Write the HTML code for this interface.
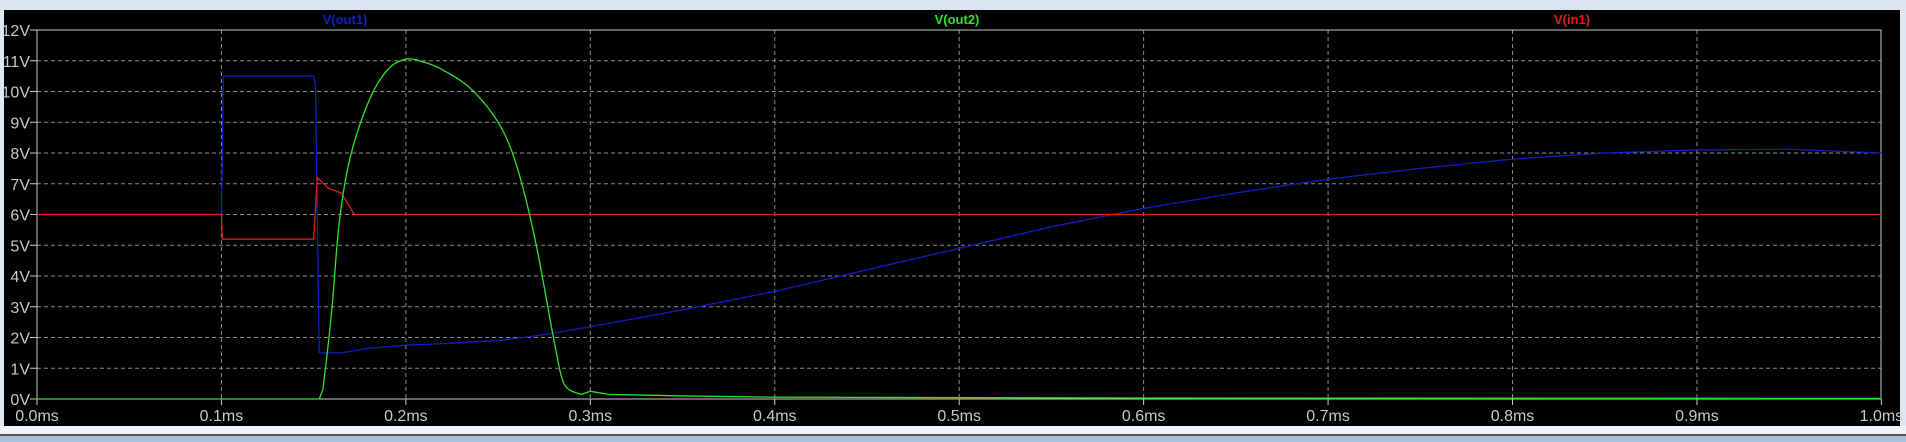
<!DOCTYPE html>
<html><head><style>
body{margin:0;width:1906px;height:442px;overflow:hidden;background:#dfe8f2;position:relative;font-family:"Liberation Sans",sans-serif}
#top{position:absolute;left:0;top:0;width:1906px;height:10px;background:#dce6f1}
#win{position:absolute;left:4px;top:10px;width:1896px;height:416px;background:#000}
#strip{position:absolute;left:0;top:426px;width:1906px;height:8px;background:#eef3f8}
#dk{position:absolute;left:0;top:434px;width:1906px;height:2px;background:#555}
#bl{position:absolute;left:0;top:436px;width:1906px;height:6px;background:#a9c1db}
svg{position:absolute;left:0;top:0}
text{font-family:"Liberation Sans Narrow","Liberation Sans",sans-serif}
</style></head><body>
<div id="top"></div><div id="win"></div><div id="strip"></div><div id="dk"></div><div id="bl"></div>
<svg id="s" width="1906" height="442"></svg>
<script>
var X=t=>37+t*1844.4, Y=v=>399-v*30.75, s=document.getElementById('s'), h='';
for(var i=1;i<10;i++){var x=X(i/10);h+=`<line x1="${x}" y1="30" x2="${x}" y2="399" stroke="#8a8a8a" stroke-dasharray="4,3"/>`;}
for(var v=1;v<12;v++){var y=Y(v);h+=`<line x1="37" y1="${y}" x2="1881" y2="${y}" stroke="#8a8a8a" stroke-dasharray="4,3"/>`;}
h+=`<rect x="37" y="${Y(12)}" width="1844" height="${Y(0)-Y(12)}" fill="none" stroke="#c8c8c8"/>`;
for(var v=0;v<=12;v++){var y=Y(v);h+=`<line x1="30" y1="${y}" x2="37" y2="${y}" stroke="#c8c8c8"/><text x="30" y="${y+6}" fill="#c8c8c8" font-size="16" text-anchor="end">${v}V</text>`;}
for(var i=0;i<=10;i++){var x=X(i/10);h+=`<line x1="${x}" y1="399" x2="${x}" y2="405" stroke="#c8c8c8"/><text x="${x}" y="421" fill="#c8c8c8" font-size="16" text-anchor="middle">${(i/10).toFixed(1)}ms</text>`;}
function P(a,c){return `<polyline fill="none" stroke="${c}" stroke-width="1.3" points="${a.map(p=>X(p[0])+','+Y(p[1])).join(' ')}"/>`;}
function S(a){var o=[];for(var i=0;i<a.length-1;i++){var p0=a[Math.max(0,i-1)],p1=a[i],p2=a[i+1],p3=a[Math.min(a.length-1,i+2)];for(var k=0;k<8;k++){var t=k/8,t2=t*t,t3=t2*t;var f=(q)=>0.5*((2*p1[q])+(-p0[q]+p2[q])*t+(2*p0[q]-5*p1[q]+4*p2[q]-p3[q])*t2+(-p0[q]+3*p1[q]-3*p2[q]+p3[q])*t3);o.push([f(0),f(1)]);}}o.push(a[a.length-1]);return o;}
var blue=[[0,6],[0.1,6],[0.101,10.5],[0.15,10.5],[0.151,10.2],[0.153,1.5],[0.165,1.5],[0.18,1.65],[0.2,1.75],[0.22,1.8],[0.25,1.9],[0.27,2.05],[0.3,2.35],[0.35,2.9],[0.4,3.5],[0.45,4.2],[0.5,4.9],[0.55,5.6],[0.6,6.2],[0.65,6.7],[0.7,7.15],[0.75,7.5],[0.8,7.8],[0.85,8.0],[0.9,8.1],[0.95,8.12],[1.0,8.0]];
var red=[[0,6],[0.1,6],[0.1005,5.2],[0.15,5.2],[0.152,7.2],[0.158,6.85],[0.165,6.7],[0.168,6.4],[0.172,6.0],[1,6]];
var g1=[[0,0],[0.153,0],[0.155,0.3],[0.157,1.3]];
var g2=S([[0.157,1.3],[0.16,3],[0.164,5.8],[0.17,7.9],[0.18,9.7],[0.19,10.7],[0.2,11.05],[0.21,10.95],[0.22,10.7],[0.235,10.1],[0.25,9.0],[0.26,7.6],[0.27,5.2],[0.28,2.0],[0.285,0.6],[0.29,0.25]]);
var g3=[[0.29,0.25],[0.295,0.15],[0.3,0.25],[0.31,0.15],[0.35,0.1],[0.4,0.06],[0.6,0.03],[1,0.02]];
var green=g1.concat(g2,g3);
h+=P(blue,'#1020c0')+P(red,'#e02020')+P(green,'#30e030');
h+=`<text x="345" y="24" fill="#1020c0" font-size="13" font-weight="bold" text-anchor="middle">V(out1)</text>`;
h+=`<text x="957" y="24" fill="#30e030" font-size="13" font-weight="bold" text-anchor="middle">V(out2)</text>`;
h+=`<text x="1572" y="24" fill="#e02020" font-size="13" font-weight="bold" text-anchor="middle">V(in1)</text>`;
s.innerHTML=h;
</script>
</body></html>
